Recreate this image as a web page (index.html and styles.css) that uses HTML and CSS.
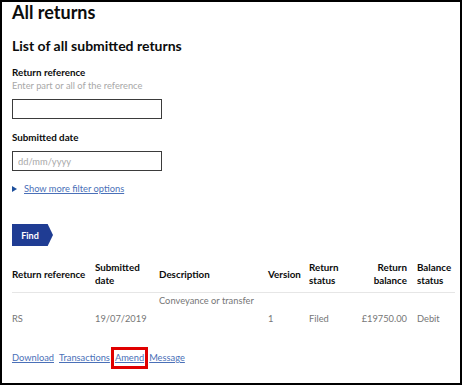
FILE: index.html
```html
<!DOCTYPE html>
<html lang="en">
<head>
  <meta charset="UTF-8">
  <title>All returns</title>
  <link rel="stylesheet" href="styles.css">
</head>
<body>
  <div class="frame">
    <h1>All returns</h1>
    <h2>List of all submitted returns</h2>
    <div class="field">
      <label for="ref">Return reference</label>
      <span class="hint">Enter part or all of the reference</span>
      <input type="text" id="ref">
    </div>
    <div class="field">
      <label for="date">Submitted date</label>
      <input type="text" id="date" placeholder="dd/mm/yyyy">
    </div>
    <div class="more">
      <span class="arrow"></span>
      <a href="#">Show more filter options</a>
    </div>
    <button class="find" type="button">Find</button>
    <table>
      <colgroup>
        <col class="c1"><col class="c2"><col class="c3"><col class="c4"><col class="c5"><col class="c6"><col class="c7">
      </colgroup>
      <thead>
        <tr>
          <th>Return reference</th>
          <th>Submitted date</th>
          <th>Description</th>
          <th>Version</th>
          <th>Return status</th>
          <th class="num">Return balance</th>
          <th class="last">Balance status</th>
        </tr>
      </thead>
      <tbody>
        <tr>
          <td>RS</td>
          <td>19/07/2019</td>
          <td class="desc">Conveyance or transfer</td>
          <td>1</td>
          <td>Filed</td>
          <td class="num">£19750.00</td>
          <td class="last">Debit</td>
        </tr>
      </tbody>
    </table>
    <div class="actions">
      <a href="#">Download</a>
      <a href="#">Transactions</a>
      <a href="#" class="marked">Amend</a>
      <a href="#">Message</a>
    </div>
  </div>
</body>
</html>
```

FILE: styles.css
```css
* {
  margin: 0px;
  padding: 0px;
  box-sizing: border-box;
}

body {
  font-family: Lato, "Liberation Sans", sans-serif;
  color: #0b0c0c;
  background-color: white;
}

.frame {
  width: 462px;
  height: 385px;
  border: 2px solid black;
  padding-left: 10px;
  display: flex;
  flex-direction: column;
  align-items: flex-start;
}

h1 {
  font-size: 18px;
  line-height: 20px;
  font-weight: 700;
}

h2 {
  font-size: 14px;
  line-height: 16px;
  font-weight: 700;
  margin-top: 16px;
}

.field {
  display: flex;
  flex-direction: column;
  margin-top: 12px;
}

label {
  font-size: 9.8px;
  line-height: 12px;
  font-weight: 700;
}

.hint {
  font-size: 9.3px;
  line-height: 12px;
  color: #a8a8a8;
  margin-top: 2px;
}

input {
  width: 150px;
  height: 20px;
  margin-top: 7px;
  border: 1.5px solid #3b3b3b;
  padding-left: 5px;
  font-family: Lato, "Liberation Sans", sans-serif;
  font-size: 9.3px;
  color: #0b0c0c;
}

.field + .field input {
  margin-top: 8px;
}

input::placeholder {
  color: #a8a8a8;
}

.more {
  display: flex;
  align-items: center;
  gap: 7px;
  margin-top: 12px;
  font-size: 9.3px;
  line-height: 12px;
}

.arrow {
  width: 0;
  height: 0;
  border-top: 3.5px solid transparent;
  border-bottom: 3.5px solid transparent;
  border-left: 5px solid #1d4f9c;
}

a {
  color: #4a70b8;
  text-decoration: underline;
}

.find {
  margin-top: 29px;
  width: 41px;
  height: 22px;
  border: none;
  background-color: #1f3c93;
  color: white;
  font-family: Lato, "Liberation Sans", sans-serif;
  font-size: 9px;
  font-weight: 700;
  padding-right: 5px;
  clip-path: polygon(0 0, 87% 0, 100% 50%, 87% 100%, 0 100%);
}

table {
  margin-top: 15px;
  width: 443px;
  table-layout: fixed;
  border-collapse: collapse;
}

.c1 { width: 83px; }
.c2 { width: 64px; }
.c3 { width: 109px; }
.c4 { width: 41px; }
.c5 { width: 48px; }
.c6 { width: 50px; }
.c7 { width: 48px; }

th {
  text-align: left;
  font-size: 9.8px;
  font-weight: 700;
  line-height: 13px;
  vertical-align: middle;
  padding-bottom: 5px;
  border-bottom: 1px solid #e6e6e6;
}

td {
  color: #767676;
  font-size: 9.3px;
  line-height: 14px;
  vertical-align: bottom;
  padding-top: 1px;
}

td.desc {
  vertical-align: top;
  padding-bottom: 18px;
}

.num {
  text-align: right;
}

.last {
  padding-left: 10px;
}

.actions {
  display: flex;
  gap: 5px;
  margin-top: 25px;
  font-size: 9.3px;
  line-height: 14px;
}

.actions .marked {
  outline: 3px solid #e00000;
  outline-offset: 1px;
}
```
